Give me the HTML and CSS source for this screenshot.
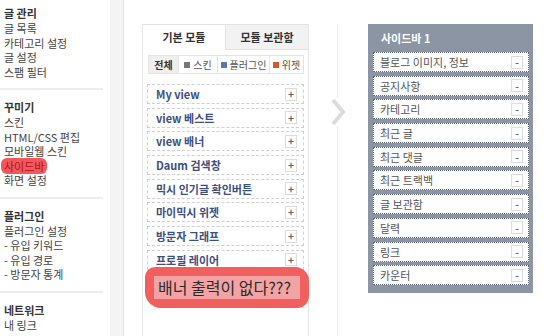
FILE: index.html
```html
<!DOCTYPE html>
<html>
<head>
  <title>사이드바</title>
  <link rel="stylesheet" href="styles.css">
</head>
<body>
<div class="page">
  <nav class="menu">
    <div class="menu-group first">
      <h4>글 관리</h4>
      <ul>
        <li>글 목록</li>
        <li>카테고리 설정</li>
        <li>글 설정</li>
        <li>스팸 필터</li>
      </ul>
    </div>
    <div class="menu-group">
      <h4>꾸미기</h4>
      <ul>
        <li>스킨</li>
        <li>HTML/CSS 편집</li>
        <li>모바일웹 스킨</li>
        <li><span class="marked">사이드바</span></li>
        <li>화면 설정</li>
      </ul>
    </div>
    <div class="menu-group">
      <h4>플러그인</h4>
      <ul>
        <li>플러그인 설정</li>
        <li>- 유입 키워드</li>
        <li>- 유입 경로</li>
        <li>- 방문자 통계</li>
      </ul>
    </div>
    <div class="menu-group last">
      <h4>네트워크</h4>
      <ul>
        <li>내 링크</li>
      </ul>
    </div>
  </nav>
  <div class="strip"></div>

  <main class="content">
    <section class="modules">
      <div class="tabs">
        <div class="tab active">기본 모듈</div>
        <div class="tab">모듈 보관함</div>
      </div>
      <div class="filters">
        <div class="filter all">전체</div>
        <div class="filter"><span class="dot skin"></span>스킨</div>
        <div class="filter"><span class="dot plugin"></span>플러그인</div>
        <div class="filter"><span class="dot widget"></span>위젯</div>
      </div>
      <ul class="module-list">
        <li>My view<span class="btn">+</span></li>
        <li>view 베스트<span class="btn">+</span></li>
        <li>view 배너<span class="btn">+</span></li>
        <li>Daum 검색창<span class="btn">+</span></li>
        <li>믹시 인기글 확인버튼<span class="btn">+</span></li>
        <li>마이믹시 위젯<span class="btn">+</span></li>
        <li>방문자 그래프<span class="btn">+</span></li>
        <li>프로필 레이어<span class="btn">+</span></li>
      </ul>
      <div class="note">
        <span class="note-text">배너 출력이 없다???</span>
      </div>
    </section>

    <div class="divider">
      <svg class="chevron" width="16" height="28" viewBox="0 0 16 28">
        <polyline points="3,2 13,14 3,26" fill="none" stroke="#dcdcdc" stroke-width="4"/>
      </svg>
    </div>

    <section class="sidebar-box">
      <h3>사이드바 1</h3>
      <ul class="sidebar-list">
        <li>블로그 이미지, 정보<span class="btn">-</span></li>
        <li>공지사항<span class="btn">-</span></li>
        <li>카테고리<span class="btn">-</span></li>
        <li>최근 글<span class="btn">-</span></li>
        <li>최근 댓글<span class="btn">-</span></li>
        <li>최근 트랙백<span class="btn">-</span></li>
        <li>글 보관함<span class="btn">-</span></li>
        <li>달력<span class="btn">-</span></li>
        <li>링크<span class="btn">-</span></li>
        <li>카운터<span class="btn">-</span></li>
      </ul>
    </section>
  </main>
</div>
</body>
</html>
```

FILE: styles.css
```css
body {
  margin: 0;
  background-color: #fff;
  font-family: "Noto Sans CJK KR", "Noto Sans", sans-serif;
  font-size: 11px;
  color: #444;
}

ul {
  list-style: none;
  margin: 0;
  padding: 0;
}

.page {
  display: flex;
  height: 336px;
  overflow: hidden;
}

/* left menu */

.menu {
  width: 110px;
  flex-shrink: 0;
}

.menu-group {
  width: 103px;
  padding: 10px 0 9px 4px;
  box-sizing: border-box;
  border-bottom: 2px solid #ededed;
}

.menu-group.first {
  padding-top: 6px;
}

.menu-group.last {
  border-bottom: none;
}

.menu-group h4 {
  margin: 0;
  font-size: 11px;
  line-height: 15px;
  color: #333;
  font-weight: bold;
}

.menu-group li {
  line-height: 14.5px;
  white-space: nowrap;
}

.marked {
  margin-left: -3px;
  padding: 0 3px;
  background-color: #f2575c;
  border-radius: 6px;
  color: #b0121c;
}

.strip {
  width: 13px;
  flex-shrink: 0;
  background-color: #f4f4f4;
  border-right: 1px solid #e2e2e2;
}

/* main area */

.content {
  display: flex;
  align-items: flex-start;
  padding-left: 18px;
  height: 100%;
}

.modules {
  position: relative;
  width: 167px;
  height: 100%;
  margin-top: 24px;
  box-sizing: border-box;
  border-left: 1px solid #e6e6e6;
  border-right: 1px solid #e6e6e6;
}

.tabs {
  display: flex;
  height: 26px;
}

.tab {
  flex: 1;
  display: flex;
  align-items: center;
  justify-content: center;
  font-weight: bold;
  color: #333;
  background-color: #f2f2f2;
  border-top: 1px solid #e2e2e2;
  border-bottom: 1px solid #e2e2e2;
  border-left: 1px solid #e2e2e2;
}

.tab.active {
  flex: 0 0 82px;
  background-color: #fff;
  border-bottom-color: #fff;
  border-left: none;
}

.filters {
  display: flex;
  height: 17px;
  margin: 5px 4px 0 5px;
  border: 1px solid #e4e4e4;
}

.filter {
  display: flex;
  align-items: center;
  justify-content: center;
  gap: 3px;
  font-size: 10px;
  color: #555;
  border-left: 1px solid #e4e4e4;
}

.filter:nth-child(1) { width: 29px; }
.filter:nth-child(2) { width: 38px; }
.filter:nth-child(3) { width: 51px; }
.filter:nth-child(4) { flex: 1; }

.filter.all {
  border-left: none;
  background-color: #efefef;
  font-weight: bold;
  color: #333;
}

.dot {
  width: 6px;
  height: 6px;
}

.dot.skin { background-color: #777; }
.dot.plugin { background-color: #5877b3; }
.dot.widget { background-color: #d2582b; }

.module-list {
  display: flex;
  flex-direction: column;
  gap: 3.7px;
  margin: 10px 4px 0 4px;
}

.module-list li {
  display: flex;
  align-items: center;
  justify-content: space-between;
  height: 20px;
  padding: 0 6px 0 8px;
  box-sizing: border-box;
  border: 1px dashed #cfcfcf;
  font-weight: bold;
  color: #3f4f7d;
}

.btn {
  display: flex;
  align-items: center;
  justify-content: center;
  width: 10px;
  height: 11px;
  border: 1px solid #dcdcdc;
  background-color: #fff;
  font-size: 10px;
  font-weight: bold;
  line-height: 1;
  color: #666;
}

/* red annotation drawn over the list */

.note {
  position: absolute;
  left: 2px;
  top: 243px;
  width: 164px;
  height: 41px;
  display: flex;
  align-items: center;
  padding-left: 9px;
  box-sizing: border-box;
  background-color: #f25f5f;
  border-radius: 10px 14px 12px 16px;
}

.note-text {
  display: block;
  width: 146px;
  height: 23px;
  line-height: 23px;
  padding-left: 4px;
  box-sizing: border-box;
  background-color: #f3a3a3;
  font-size: 16px;
  color: #2a2a2a;
  white-space: nowrap;
}

.divider {
  position: relative;
  width: 1px;
  height: 100%;
  margin: 24px 30px 0 28px;
  background-color: #e8e8e8;
}

.chevron {
  position: absolute;
  left: -7px;
  top: 74px;
  background-color: #fff;
}

/* sidebar */

.sidebar-box {
  width: 165px;
  margin-top: 24px;
  padding: 0 4px 8px 5px;
  box-sizing: border-box;
  background-color: #8b95a3;
}

.sidebar-box h3 {
  margin: 0;
  padding-left: 8px;
  height: 28px;
  line-height: 28px;
  font-size: 11px;
  color: #fff;
  font-weight: bold;
}

.sidebar-list {
  display: flex;
  flex-direction: column;
  gap: 3.7px;
}

.sidebar-list li {
  display: flex;
  align-items: center;
  justify-content: space-between;
  height: 20px;
  padding: 0 5px 0 6px;
  box-sizing: border-box;
  background-color: #fff;
  border: 1px dotted #5d6672;
  color: #555;
}
```
